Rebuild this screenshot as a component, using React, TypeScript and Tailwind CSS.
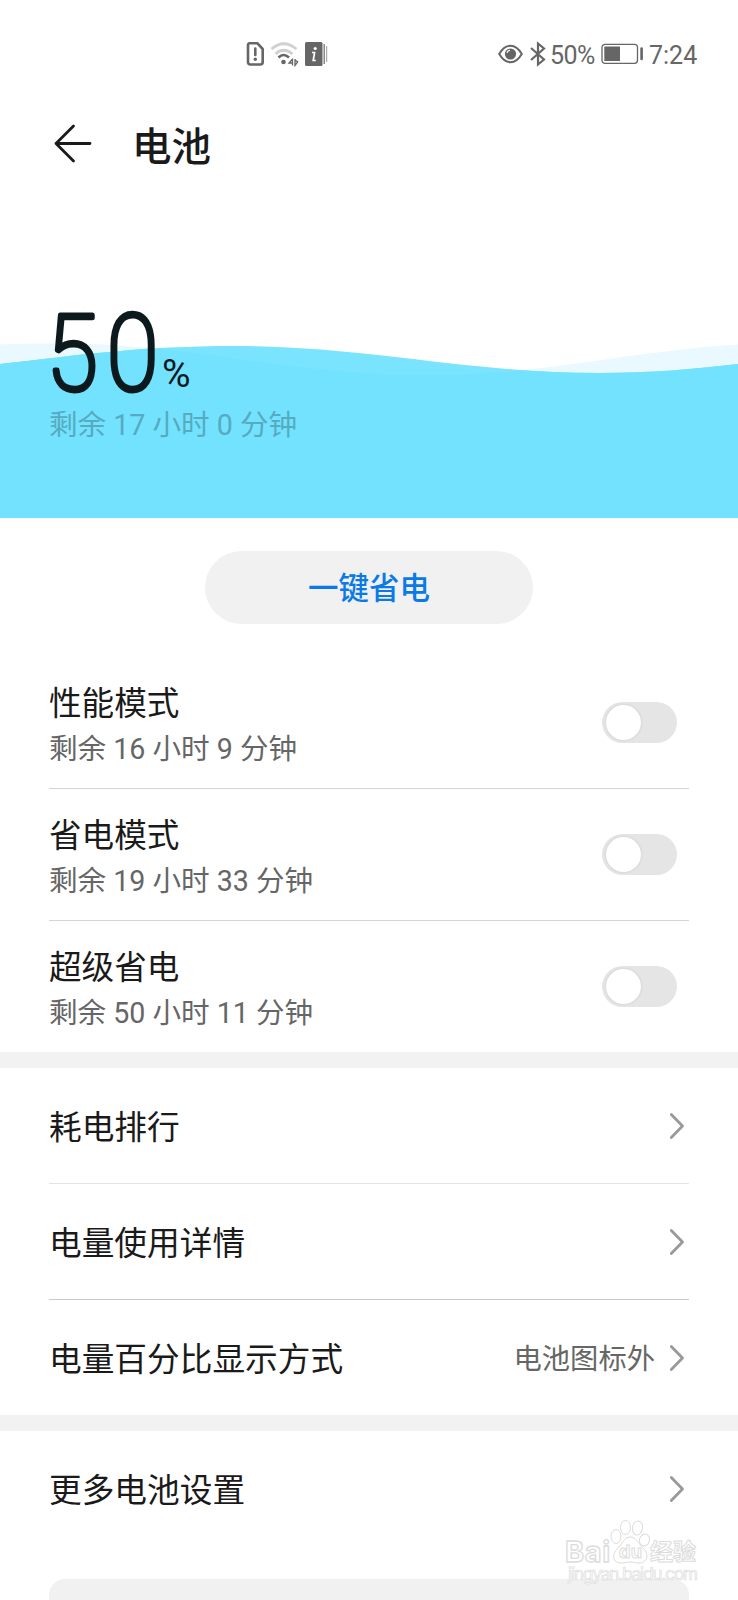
import { useState } from 'react'

interface Mode {
  id: string;
  title: string;
  remaining: string;
}

interface LinkRow {
  title: string;
  value?: string;
  border: string;
}

const modes: Mode[] = [
  { id: 'performance', title: '性能模式', remaining: '剩余 16 小时 9 分钟' },
  { id: 'saving', title: '省电模式', remaining: '剩余 19 小时 33 分钟' },
  { id: 'ultra', title: '超级省电', remaining: '剩余 50 小时 11 分钟' },
]

const usageRows: LinkRow[] = [
  { title: '耗电排行', border: 'h-[116px] border-b border-[#e4e4e4]' },
  { title: '电量使用详情', border: 'h-[116px] border-b border-[#c9c9c9]' },
  { title: '电量百分比显示方式', value: '电池图标外', border: 'h-[115px]' },
]

const BACK_WAVE = 'M0 164.500 C20 163.500 40 163.500 62 163.500 C190 163.500 290 195 423 195 C550 195 620 172 738 164.500 V338 H0 Z'
const FRONT_WAVE = 'M0 184 C80 175 140 166 235 166 C368 166 467 193 600 193 C650 193 695 189 738 184 V338 H0 Z'

function StatusBar() {
  return (
    <div className="flex h-[108px] items-start pt-[40px] text-[#666666]">
      <div className="ml-[246px] flex h-[28px] items-center">
        <svg width="19" height="26" viewBox="0 0 19 26" fill="none" stroke="currentColor" strokeWidth="2.600">
          <path d="M3.500 2.300 H11.500 L16.700 8 V21 Q16.700 23.500 14.200 23.500 H4.300 Q2 23.500 2 21 V4.500 Q2 2.300 3.500 2.300 Z" strokeLinejoin="round" />
          <path d="M9.300 7.500 V14" strokeLinecap="round" />
          <circle cx="9.300" cy="18.200" r="1.700" fill="currentColor" stroke="none" />
        </svg>
        <svg className="ml-[5px]" width="29" height="26" viewBox="0 0 29 26" fill="none">
          <path d="M1.500 8 Q13.500 -2.500 26.500 8" stroke="#d0d0d0" strokeWidth="2.700" />
          <path d="M5.500 13 Q13.500 5.500 22.500 13" stroke="#d0d0d0" strokeWidth="2.700" />
          <path d="M8.500 16.500 Q13.500 11.500 19 16.500" stroke="currentColor" strokeWidth="2.600" />
          <circle cx="13.500" cy="21" r="2.300" fill="currentColor" />
          <path d="M22.500 17.500 V24.500 M22.500 18 L19 22 H22.500 M25 18 V24.500 L27.700 21 L25 19" stroke="currentColor" strokeWidth="1.300" />
        </svg>
        <svg className="ml-[6px]" width="23" height="26" viewBox="0 0 23 26">
          <rect x="0" y="1" width="17.500" height="24" rx="1.500" fill="currentColor" />
          <path d="M19.200 3 V23" stroke="#777777" strokeWidth="1.300" />
          <path d="M21.600 5 V21" stroke="#aaaaaa" strokeWidth="1.200" />
          <circle cx="10.200" cy="7.500" r="1.600" fill="white" />
          <path d="M7 11.500 H9.600 L8.200 19.500 H10.800" fill="none" stroke="white" strokeWidth="1.700" />
        </svg>
      </div>
      <div className="ml-[170px] flex h-[28px] items-center text-[25px] leading-[28px]">
        <svg width="25" height="20" viewBox="0 0 25 20" fill="none" stroke="currentColor" strokeWidth="2">
          <path d="M1.200 10 Q6 1.800 12.500 1.800 Q19 1.800 23.800 10 Q19 18.200 12.500 18.200 Q6 18.200 1.200 10 Z" />
          <circle cx="12.500" cy="10" r="5.600" fill="currentColor" stroke="none" />
          <path d="M8.900 8.800 Q9.800 6.500 12 6.300" stroke="white" strokeWidth="1.300" />
        </svg>
        <svg className="ml-[6px]" width="18" height="26" viewBox="0 0 18 26" fill="none" stroke="currentColor" strokeWidth="2.200">
          <path d="M2 7 L15 18.500 L9 23.500 V2.500 L15 7.500 L2 19" />
        </svg>
        <span className="ml-[3px] w-[51px] pt-[3px] tracking-[-0.500px]">50%</span>
        <svg width="43" height="22" viewBox="0 0 43 22">
          <rect x="1" y="1.300" width="35.500" height="19" rx="3" fill="none" stroke="currentColor" strokeWidth="1.300" />
          <rect x="3.300" y="3.500" width="15.700" height="14.500" fill="currentColor" />
          <path d="M40.600 5.500 V16" stroke="currentColor" strokeWidth="2.600" strokeLinecap="round" />
        </svg>
        <span className="ml-[5px] pt-[3px]">7:24</span>
      </div>
    </div>
  )
}

function Wave() {
  return (
    <svg className="absolute inset-0" width="738" height="338" viewBox="0 0 738 338">
      <clipPath id="front">
        <path d={FRONT_WAVE} />
      </clipPath>
      <path d={BACK_WAVE} fill="#e9f9ff" />
      <path d={FRONT_WAVE} fill="#7ae4ff" />
      <path d={BACK_WAVE} fill="#73e2ff" clipPath="url(#front)" />
    </svg>
  )
}

// Thin digits with a round outline, so the stroke ends are rounded
function LevelDigits({ value }: { value: string }) {
  return (
    <svg className="overflow-visible" width="108" height="84" viewBox="0 0 108 84" fill="#0d1a1d" stroke="#0d1a1d" strokeWidth="5" strokeLinejoin="round">
      <text transform="translate(-2.500 79) scale(0.890 1)" fontSize="105" letterSpacing="10.500" className="font-thin [font-family:Roboto,sans-serif]">
        {value}
      </text>
    </svg>
  )
}

function Chevron() {
  return (
    <svg width="16" height="28" viewBox="0 0 16 28" fill="none" stroke="#999999" strokeWidth="2.800" strokeLinecap="round" strokeLinejoin="round">
      <path d="M2.300 2.500 L13.500 14 L2.300 25.500" />
    </svg>
  )
}

function Toggle({ on, onChange }: { on: boolean; onChange: () => void }) {
  return (
    <button
      type="button"
      role="switch"
      aria-checked={on}
      onClick={onChange}
      className={`mr-[12px] flex h-[41px] w-[75px] items-center rounded-full px-[4px] ${on ? 'justify-end bg-[#0a7aff]' : 'bg-[#e5e5e5]'}`}
    >
      <span className="h-[35px] w-[35px] rounded-full bg-white shadow-[0_0_3px_rgba(0,0,0,0.12)]" />
    </button>
  )
}

function LinkItem({ title, value, border }: LinkRow) {
  return (
    <div className={`mx-[49px] flex items-center justify-between ${border}`}>
      <span className="pt-[7px] text-[32.700px] text-[#1a1a1a]">{title}</span>
      <div className="mr-[4px] flex items-center gap-[14px]">
        {value && <span className="pt-[6px] text-[28.300px] text-[#666666]">{value}</span>}
        <Chevron />
      </div>
    </div>
  )
}

function Watermark() {
  return (
    <div className="absolute top-[1518px] left-[564px] h-[70px] w-[140px]">
      <svg width="140" height="70" viewBox="0 0 140 70" fill="white" stroke="#dcdcdc" strokeWidth="1">
        <ellipse cx="52" cy="18.500" rx="5" ry="7" />
        <ellipse cx="61.500" cy="9.500" rx="5" ry="7" />
        <ellipse cx="73.500" cy="10" rx="5" ry="7" transform="rotate(10 73.500 10)" />
        <ellipse cx="80.500" cy="22" rx="5" ry="6" transform="rotate(15 80.500 22)" />
        <path d="M66 19 C72 19 74 25 79 30 C86 37 83 45 75 45 C71 45 69 44 66 44 C63 44 61 45 57 45 C49 45 47 37 54 30 C59 25 60 19 66 19 Z" />
        <g className="font-bold [font-family:Inter,'Noto_Sans_CJK_SC',sans-serif]">
          <text x="1" y="43.500" fontSize="29" textLength="45" strokeWidth="1.300">Bai</text>
          <text x="55" y="40" fontSize="18" textLength="23">du</text>
          <text x="86" y="42" fontSize="23">经验</text>
        </g>
        <text x="4" y="61.500" fontSize="17" textLength="130" strokeWidth="0.700" className="[font-family:Inter,sans-serif]">jingyan.baidu.com</text>
      </svg>
    </div>
  )
}

export default function App() {
  const [enabled, setEnabled] = useState<Record<string, boolean>>({})

  const handleToggle = (id: string) => {
    setEnabled({ ...enabled, [id]: !enabled[id] })
  }

  return (
    <div className="relative h-[1600px] w-[738px] overflow-hidden bg-white [font-family:Roboto,'Noto_Sans_CJK_SC',sans-serif]">
      <StatusBar />

      <header className="flex h-[72px] items-center pl-[53px]">
        <svg width="40" height="40" viewBox="0 0 40 40" fill="none" stroke="#1a1a1a" strokeWidth="2.800" strokeLinecap="round" strokeLinejoin="round">
          <path d="M20.500 2 L3 19.500 L20.500 37 M3 19.500 H37" />
        </svg>
        <h1 className="ml-[39px] pt-[7px] text-[39.500px] font-medium text-[#1a1a1a]">电池</h1>
      </header>

      {/* Battery level */}
      <section className="relative h-[338px]">
        <Wave />
        <div className="relative pt-[131px] pl-[49px]">
          <div className="flex h-[84px] items-end text-[#0d1a1d]">
            <LevelDigits value="50" />
            <span className="ml-[5px] text-[39px] leading-[41px]">%</span>
          </div>
          <p className="mt-[12px] text-[28.600px] leading-[36px] text-[#56abc0]">剩余 17 小时 0 分钟</p>
        </div>
      </section>

      <button
        type="button"
        className="mx-auto mt-[33px] mb-[33px] flex h-[73px] w-[328px] items-center justify-center rounded-full bg-[#f1f1f1] pt-[3px] text-[30.500px] font-medium text-[#0a7ae6]"
      >
        一键省电
      </button>

      {/* Power modes */}
      <section className="mx-[49px] h-[395px] divide-y divide-[#d4d4d4]">
        {modes.map((mode) => (
          <div key={mode.id} className="flex h-[132px] items-center justify-between last:h-[131px]">
            <div className="pt-[7px]">
              <p className="text-[32.600px] leading-[46px] text-[#1a1a1a]">{mode.title}</p>
              <p className="text-[28.600px] leading-[45px] text-[#666666]">{mode.remaining}</p>
            </div>
            <Toggle on={!!enabled[mode.id]} onChange={() => handleToggle(mode.id)} />
          </div>
        ))}
      </section>

      <div className="h-[16px] bg-[#f2f2f2]" />

      {usageRows.map((row) => (
        <LinkItem key={row.title} {...row} />
      ))}

      <div className="h-[16px] bg-[#f2f2f2]" />

      <LinkItem title="更多电池设置" border="h-[115px]" />

      <div className="mx-[49px] mt-[33px] h-[60px] rounded-t-[16px] bg-[#f1f1f1]" />

      <Watermark />
    </div>
  )
}
